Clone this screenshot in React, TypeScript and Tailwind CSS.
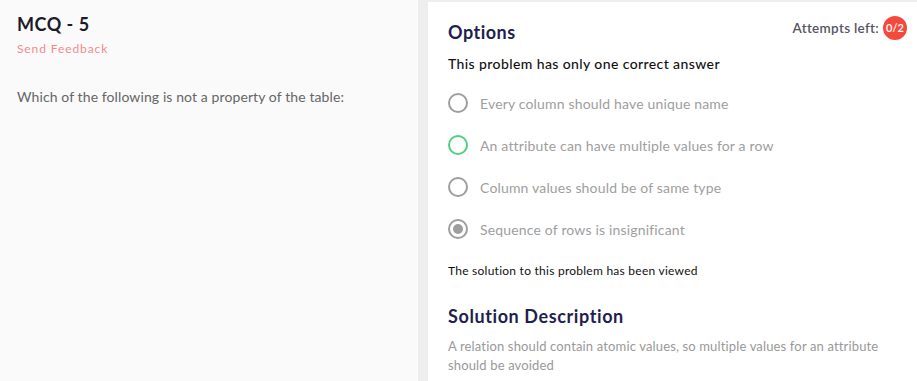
import React from 'react'

const options = [
  { text: 'Every column should have unique name', state: 'idle' },
  { text: 'An attribute can have multiple values for a row', state: 'correct' },
  { text: 'Column values should be of same type', state: 'idle' },
  { text: 'Sequence of rows is insignificant', state: 'selected' },
]

function Radio({ state }: { state: string }) {
  const border = state === 'correct' ? 'border-[#4fd080]' : 'border-[#9e9e9e]'
  return (
    <span className={`w-[20px] h-[20px] rounded-full border-2 ${border} flex items-center justify-center shrink-0`}>
      {state === 'selected' && <span className="w-[10px] h-[10px] rounded-full bg-[#9e9e9e]" />}
    </span>
  )
}

export default function App() {
  return (
    <div className="w-[917px] h-[381px] bg-[#eeeeee] flex gap-[10px] overflow-hidden" style={{ fontFamily: 'Lato, "Noto Sans", sans-serif' }}>
      {/* question */}
      <div className="w-[418px] bg-[#fafafa] pt-[13px] px-[17px]">
        <h1 className="text-[18px] font-bold text-[#1b1b2b] leading-[22px] tracking-[0.5px]">MCQ - 5</h1>
        <div className="text-[12px] text-[#f58a8a] mt-[5px] tracking-[0.9px]">Send Feedback</div>
        <p className="text-[14px] text-[#666666] mt-[28px] tracking-[0.1px]">Which of the following is not a property of the table:</p>
      </div>

      {/* options */}
      <div className="flex-1 bg-white mt-[2px] pl-[20px] pr-[10px] pt-[15px]">
        <div className="flex justify-between">
          <h2 className="text-[18px] font-bold text-[#221f4d] mt-[2px] tracking-[0.5px]">Options</h2>
          <div className="flex items-center gap-[4px] -mt-[2px] h-[26px]">
            <span className="text-[13.5px] font-semibold text-[#555566] tracking-[0.3px]">Attempts left:</span>
            <span className="w-[24px] h-[24px] rounded-full bg-[#f44a3d] text-white text-[11px] font-semibold flex items-center justify-center">0/2</span>
          </div>
        </div>
        <p className="text-[14px] text-[#111111] font-medium mt-[7px] tracking-[0.4px]">This problem has only one correct answer</p>

        <div className="mt-[8px] flex flex-col">
          {options.map((o) => (
            <div key={o.text} className="flex items-center gap-[12px] h-[42px]">
              <Radio state={o.state} />
              <span className="text-[14px] text-[#9e9e9e] tracking-[0.17px]">{o.text}</span>
            </div>
          ))}
        </div>

        <p className="text-[12px] text-[#111111] mt-[12px] tracking-[0.25px]">The solution to this problem has been viewed</p>

        <h2 className="text-[18px] font-bold text-[#221f4d] mt-[23px] tracking-[0.6px]">Solution Description</h2>
        <p className="text-[13px] text-[#999999] leading-[19px] mt-[7px] w-[445px] tracking-[0.15px]">
          A relation should contain atomic values, so multiple values for an attribute should be avoided
        </p>
      </div>
    </div>
  )
}
